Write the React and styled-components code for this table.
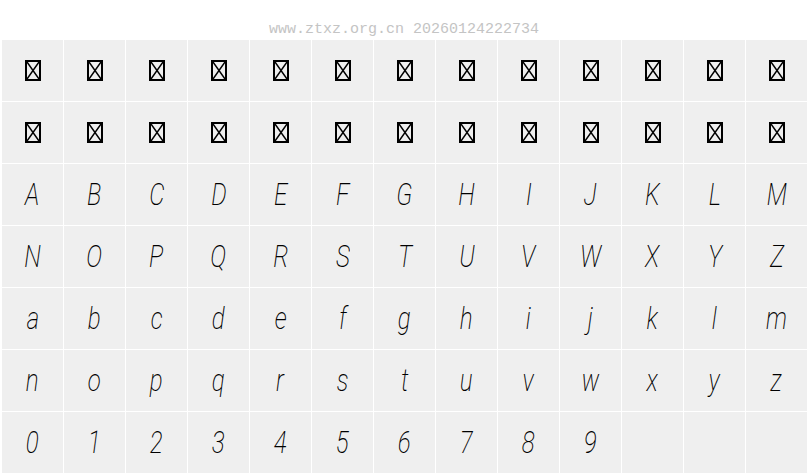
import styled, { createGlobalStyle } from "styled-components";

const GlobalStyle = createGlobalStyle`
  html, body {
    margin: 0;
    padding: 0;
    background: #ffffff;
  }
`;

const Page = styled.div`
  width: 808px;
  height: 476px;
  overflow: hidden;
`;

const Header = styled.div`
  height: 40px;
  box-sizing: border-box;
  padding-top: 22px;
  text-align: center;
  font-family: "Liberation Mono", monospace;
  font-size: 15px;
  line-height: 16px;
  color: #c4c4c4;
`;

const Grid = styled.div`
  display: grid;
  grid-template-columns: repeat(13, 61px);
  grid-auto-rows: 61px;
  gap: 1px;
  padding-left: 2px;
`;

const Cell = styled.div`
  background: #efefef;
  display: flex;
  align-items: center;
  justify-content: center;
`;

const Glyph = styled.span`
  display: inline-block;
  font-family: Roboto, "Noto Sans", sans-serif;
  font-weight: 200;
  font-style: italic;
  font-size: 31px;
  line-height: 31px;
  color: #000000;
  transform: scaleX(0.78);
`;

function MissingGlyph() {
  return (
    <svg width="16" height="21" viewBox="0 0 16 21">
      <rect x="1" y="1" width="14" height="19" fill="none" stroke="#000" strokeWidth="2" />
      <path d="M2 2 L14 19 M14 2 L2 19" stroke="#000" strokeWidth="1.4" fill="none" />
    </svg>
  );
}

const upper = "ABCDEFGHIJKLMNOPQRSTUVWXYZ".split("");
const lower = "abcdefghijklmnopqrstuvwxyz".split("");
const digits = "0123456789".split("");

export default function App() {
  return (
    <Page>
      <GlobalStyle />
      <Header>www.ztxz.org.cn 20260124222734</Header>
      <Grid>
        {Array.from({ length: 26 }).map((_, i) => (
          <Cell key={"m" + i}>
            <MissingGlyph />
          </Cell>
        ))}
        {[...upper, ...lower, ...digits].map((ch, i) => (
          <Cell key={"c" + i}>
            <Glyph>{ch}</Glyph>
          </Cell>
        ))}
        {Array.from({ length: 3 }).map((_, i) => (
          <Cell key={"e" + i} />
        ))}
      </Grid>
    </Page>
  );
}
